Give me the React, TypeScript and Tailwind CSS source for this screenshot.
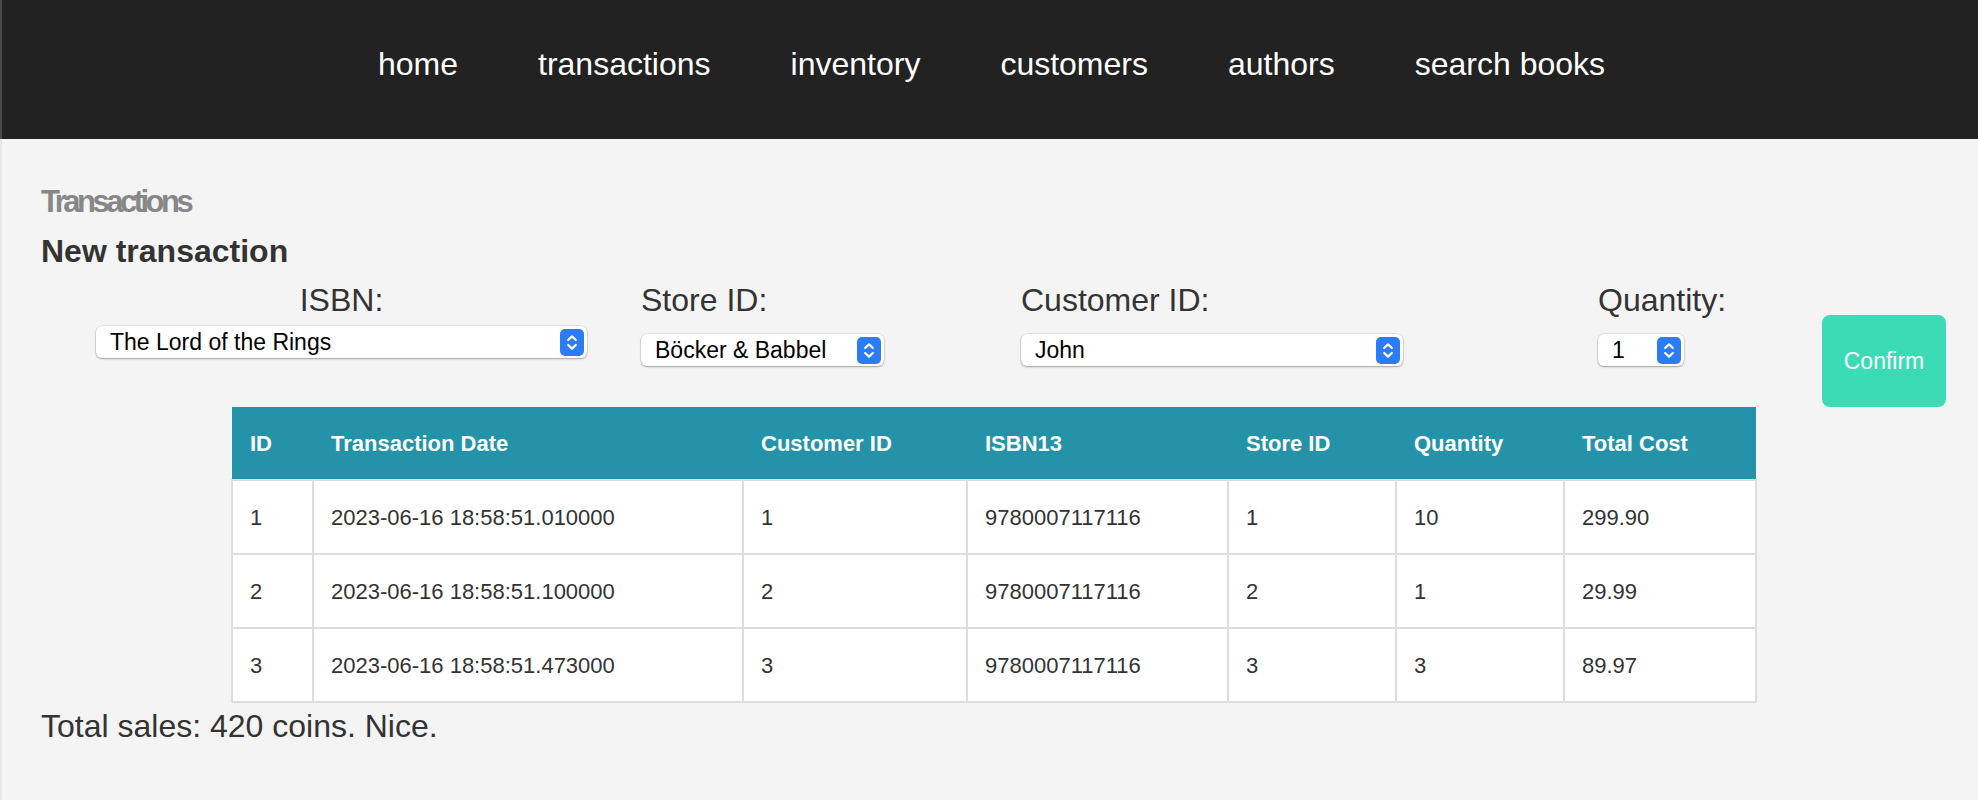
import React from "react";

const font = { fontFamily: '"Liberation Sans", Arial, Helvetica, sans-serif' };

function Stepper() {
  return (
    <svg width="24" height="27" viewBox="0 0 24 27" className="shrink-0">
      <rect x="0" y="0" width="24" height="27" rx="5" fill="#2a7df7" />
      <path d="M8.2 11 L12 7.4 L15.8 11" fill="none" stroke="#fff" strokeWidth="2.2" strokeLinecap="round" strokeLinejoin="round" />
      <path d="M8.2 16 L12 19.6 L15.8 16" fill="none" stroke="#fff" strokeWidth="2.2" strokeLinecap="round" strokeLinejoin="round" />
    </svg>
  );
}

function FakeSelect({ value, width }: { value: string; width: string }) {
  return (
    <div
      className={`${width} h-[32px] bg-white rounded-[6px] flex items-center justify-between pl-[14px] pr-[3px] shadow-[0_0_0_0.5px_rgba(0,0,0,0.12),0_1px_2px_rgba(0,0,0,0.3)]`}
    >
      <span className="text-[23px] text-black leading-none">{value}</span>
      <Stepper />
    </div>
  );
}

const headers = ["ID", "Transaction Date", "Customer ID", "ISBN13", "Store ID", "Quantity", "Total Cost"];
const widths = ["w-[81px]", "w-[430px]", "w-[224px]", "w-[261px]", "w-[168px]", "w-[168px]", "w-[192px]"];
const rows = [
  ["1", "2023-06-16 18:58:51.010000", "1", "9780007117116", "1", "10", "299.90"],
  ["2", "2023-06-16 18:58:51.100000", "2", "9780007117116", "2", "1", "29.99"],
  ["3", "2023-06-16 18:58:51.473000", "3", "9780007117116", "3", "3", "89.97"],
];

export default function App() {
  return (
    <div className="min-h-[800px] w-full bg-[#f4f4f4] flex flex-col" style={font}>
      <header className="h-[139px] shrink-0 bg-[#222222] border-l-2 border-[#4a4a4a] pl-[3px] flex justify-center items-start pt-[46px]">
        <nav className="flex gap-[80px] text-[32px] leading-[37px] text-white">
          <span>home</span>
          <span>transactions</span>
          <span>inventory</span>
          <span>customers</span>
          <span>authors</span>
          <span>search books</span>
        </nav>
      </header>

      <main className="flex-1 border-l-2 border-[#e6e6e6] pl-[39px] pt-[45px]">
        <h1 className="text-[31px] leading-[36px] font-bold tracking-[-3.5px] text-[#878787]">Transactions</h1>
        <h2 className="mt-[13px] text-[32px] leading-[36px] font-bold text-[#333333]">New transaction</h2>

        <div className="mt-[13px] flex items-start pl-[55px] text-[#333333]">
          <div className="w-[491px] flex flex-col items-center">
            <span className="text-[32px] leading-[36px]">ISBN:</span>
            <div className="mt-[8px]">
              <FakeSelect value="The Lord of the Rings" width="w-[491px]" />
            </div>
          </div>
          <div className="ml-[54px] w-[380px] flex flex-col items-start">
            <span className="text-[32px] leading-[36px]">Store ID:</span>
            <div className="mt-[16px]">
              <FakeSelect value="Böcker & Babbel" width="w-[243px]" />
            </div>
          </div>
          <div className="w-[577px] flex flex-col items-start">
            <span className="text-[32px] leading-[36px]">Customer ID:</span>
            <div className="mt-[16px]">
              <FakeSelect value="John" width="w-[382px]" />
            </div>
          </div>
          <div className="w-[224px] flex flex-col items-start">
            <span className="text-[32px] leading-[36px]">Quantity:</span>
            <div className="mt-[16px]">
              <FakeSelect value="1" width="w-[86px]" />
            </div>
          </div>
          <button className="mt-[33px] w-[124px] h-[92px] rounded-[8px] bg-[#3adbb5] text-white text-[23px]">
            Confirm
          </button>
        </div>

        <div className="pl-[190px]">
          <table className="border-collapse text-[22px]">
            <thead>
              <tr className="bg-[#2493a9] h-[73px]">
                {headers.map((h, i) => (
                  <th key={h} className={`${widths[i]} text-left font-bold text-white pl-[18px] p-0`}>
                    {h}
                  </th>
                ))}
              </tr>
            </thead>
            <tbody>
              {rows.map((r, ri) => (
                <tr key={ri} className="bg-white h-[74px]">
                  {r.map((c, ci) => (
                    <td key={ci} className="border-2 border-[#dddddd] text-[#333333] pl-[17px] p-0">
                      {c}
                    </td>
                  ))}
                </tr>
              ))}
            </tbody>
          </table>
        </div>

        <p className="mt-[5px] text-[32px] leading-[37px] text-[#333333]">Total sales: 420 coins. Nice.</p>
      </main>
    </div>
  );
}
